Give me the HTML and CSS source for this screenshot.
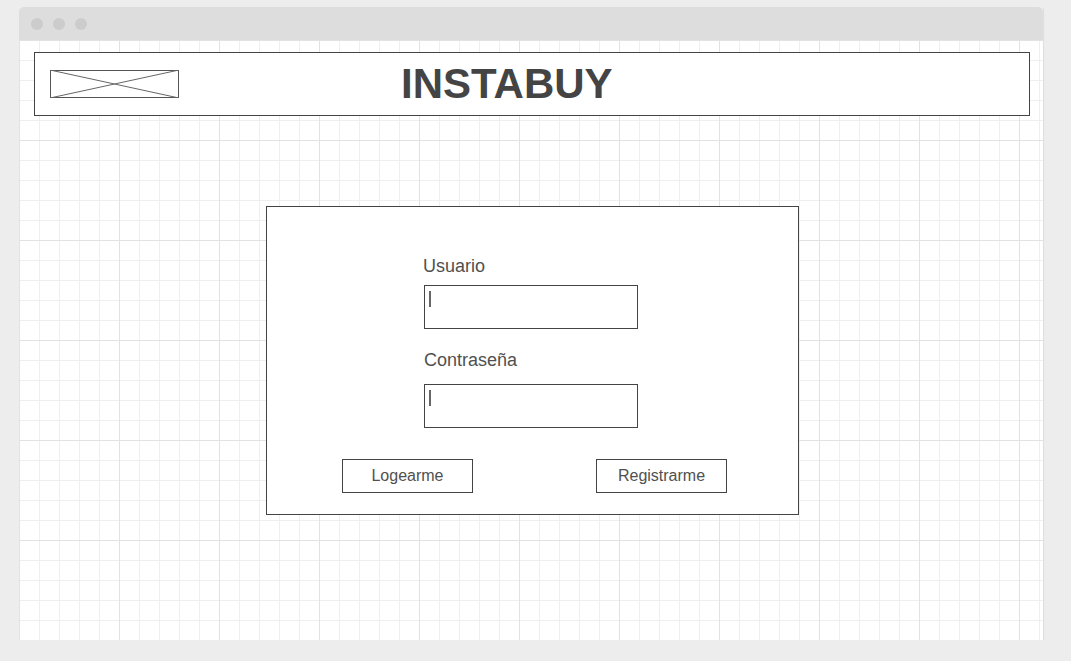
FILE: index.html
```html
<!DOCTYPE html>
<html>
	<head>
		<meta charset="utf-8">
		<title>Instabuy - Login</title>
		<link rel="stylesheet" href="styles.css">
	</head>
	<body>
		<div id="window">
			<div id="chrome">
				<span class="dot"></span>
				<span class="dot"></span>
				<span class="dot"></span>
			</div>
			<div id="canvas">
				<div id="header">
					<div class="placeholder">
						<svg width="129" height="28" viewBox="0 0 129 28">
							<line x1="0" y1="0" x2="129" y2="28" />
							<line x1="0" y1="28" x2="129" y2="0" />
						</svg>
					</div>
					<h1 class="title">INSTABUY</h1>
				</div>

				<div id="login">
					<div class="fields">
						<label class="label">Usuario</label>
						<div class="field first"><span class="caret"></span></div>
						<label class="label second">Contrase&ntilde;a</label>
						<div class="field"><span class="caret"></span></div>
					</div>
					<div class="buttons">
						<div class="button">Logearme</div>
						<div class="button">Registrarme</div>
					</div>
				</div>
			</div>
		</div>
	</body>
</html>
```

FILE: styles.css
```css
*{
	margin:0px;
	padding:0px;
	box-sizing:border-box;
}
body{
	background-color:#ededed;
	font-family:"Liberation Sans",Arial,sans-serif;
	color:#444;
	padding:7px 0px 0px 19px;
}
#window{
	width:1024px;
	box-shadow:1px 1px 1px rgba(0,0,0,0.06);
}
#chrome{
	height:33px;
	background-color:#ddd;
	border-radius:5px 5px 0px 0px;
	display:flex;
	align-items:center;
	gap:10px;
	padding-left:12px;
}
.dot{
	width:12px;
	height:12px;
	border-radius:50%;
	background-color:#ccc;
}
#canvas{
	height:600px;
	padding-top:12px;
	background-color:#fff;
	/* major lines every 100px, minor every 20px */
	background-image:
		linear-gradient(to right,#e2e2e2 1px,transparent 1px),
		linear-gradient(to bottom,#e2e2e2 1px,transparent 1px),
		linear-gradient(to right,#efefef 1px,transparent 1px),
		linear-gradient(to bottom,#efefef 1px,transparent 1px);
	background-size:100px 100px,100px 100px,20px 20px,20px 20px;
}
#header{
	width:996px;
	height:64px;
	margin-left:15px;
	border:1px solid #444;
	background-color:#fff;
	display:flex;
	align-items:center;
	padding-left:15px;
}
.placeholder{
	width:129px;
	height:28px;
	border:1px solid #555;
	position:relative;
}
.placeholder svg{
	position:absolute;
	left:-1px;
	top:-1px;
}
.placeholder line{
	stroke:#666;
	stroke-width:1;
}
.title{
	margin-left:222px;
	font-size:42px;
	font-weight:bold;
	color:#444;
	line-height:48px;
}
#login{
	width:533px;
	height:309px;
	margin:90px 0px 0px 247px;
	border:1px solid #444;
	background-color:#fff;
	padding-top:49px;
}
.fields{
	margin-left:156px;
	display:flex;
	flex-direction:column;
	align-items:flex-start;
}
.label{
	font-size:18px;
	line-height:21px;
	color:#505050;
}
.label.second{
	margin-top:21px;
	margin-left:1px;
}
.field{
	width:214px;
	height:44px;
	margin-top:8px;
	margin-left:1px;
	border:1px solid #444;
	padding:5px 0px 0px 4px;
}
.field + .label + .field{
	margin-top:13px;
}
.caret{
	display:block;
	width:2px;
	height:16px;
	background-color:#666;
}
.buttons{
	display:flex;
	gap:123px;
	margin:31px 0px 0px 75px;
}
.button{
	width:131px;
	height:34px;
	border:1px solid #444;
	font-size:16px;
	line-height:32px;
	text-align:center;
	color:#505050;
}
```
